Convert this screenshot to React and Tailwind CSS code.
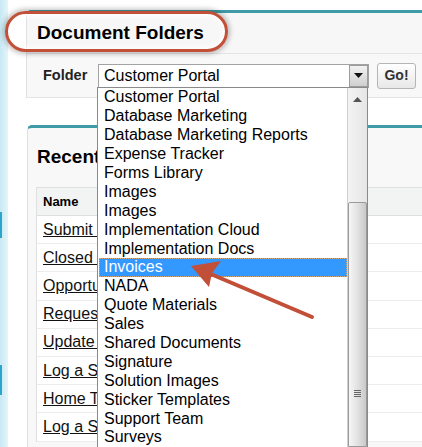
import React from "react";

const folders = [
  "Customer Portal",
  "Database Marketing",
  "Database Marketing Reports",
  "Expense Tracker",
  "Forms Library",
  "Images",
  "Images",
  "Implementation Cloud",
  "Implementation Docs",
  "Invoices",
  "NADA",
  "Quote Materials",
  "Sales",
  "Shared Documents",
  "Signature",
  "Solution Images",
  "Sticker Templates",
  "Support Team",
  "Surveys",
  "Training",
];

const recent = [
  "Submit feedback",
  "Closed cases",
  "Opportunity",
  "Request form",
  "Update Billing",
  "Log a SFDC case",
  "Home Tab",
  "Log a SFDC issue",
];

export default function App() {
  return (
    <div
      className="relative flex h-[447px] w-[422px] overflow-hidden bg-white text-[#222]"
      style={{ fontFamily: '"Liberation Sans", Arial, sans-serif' }}
    >
      {/* left page edge */}
      <div className="flex w-[8px] shrink-0 flex-col bg-gradient-to-r from-[#c6e9f4] to-[#e4f5fa]">
        <div className="h-[212px]" />
        <div className="h-[26px] w-[2px] bg-[#2aa6cc]" />
        <div className="h-[127px]" />
        <div className="h-[30px] w-[2px] bg-[#2aa6cc]" />
      </div>
      <div className="w-[18px] shrink-0" />

      <div className="flex min-w-0 flex-1 flex-col">
        {/* Document Folders panel */}
        <div className="mt-[10px] rounded-tl-[5px] border-l border-t-[3px] border-l-[#e0e0e0] border-t-[#3f9ba6] bg-[#f7f7f7]">
          <div className="flex h-[40px] items-center pl-[10px]">
            <h2 className="relative z-10 text-[19px] font-bold text-black">Document Folders</h2>
          </div>
          <div className="flex h-[45px] items-center border-y border-[#e4e4e4] bg-[#f8f8f8] pl-[16px]">
            <span className="w-[55px] text-[14.5px] font-bold text-[#222]">Folder</span>
            <div className="flex h-[24px] w-[271px] items-center justify-between border border-[#a3a3a3] bg-white pl-[5px]">
              <span className="text-[16px] text-black">Customer Portal</span>
              <span className="flex h-[22px] w-[19px] items-center justify-center border border-[#9c9c9c] bg-gradient-to-b from-[#f2f2f2] to-[#cfcfcf]">
                <svg width="9" height="5" viewBox="0 0 9 5">
                  <path d="M0 0h9L4.5 5z" fill="#111" />
                </svg>
              </span>
            </div>
            <button className="ml-[8px] h-[26px] w-[39px] rounded-[3px] border border-[#b5b5b5] bg-gradient-to-b from-white to-[#e8e8e8] text-[14px] font-bold text-[#333]">
              Go!
            </button>
          </div>
        </div>

        {/* Recent panel */}
        <div className="mt-[27px] ml-[1px] flex-1 rounded-tl-[5px] border-l border-t-[3px] border-l-[#e0e0e0] border-t-[#3f9ba6] bg-[#f8f8f8] pl-[8px]">
          <h2 className="flex h-[59px] w-[62px] items-center overflow-hidden whitespace-nowrap pl-[1px] text-[19px] font-bold text-black">
            Recent Documents
          </h2>
          <div className="border-l border-t border-[#e0e0e0] bg-white">
            <div className="flex h-[28px] items-center border-b border-[#dedede] bg-[#f2f3f3] pl-[6px] text-[13px] font-bold text-black">
              Name
            </div>
            {recent.map((r, i) => (
              <div key={i} className="flex h-[28.2px] items-center border-b border-[#ececec] pl-[6px]">
                <span className="w-[55px] overflow-hidden whitespace-nowrap text-[16px] text-[#111] underline">{r}</span>
              </div>
            ))}
          </div>
        </div>
      </div>

      {/* annotation ellipse */}
      <div className="pointer-events-none absolute left-[5px] top-[11px] h-[41px] w-[223px] rounded-full border-[3px] border-[#c24f37] shadow-[0_0_5px_2px_rgba(0,0,0,0.25),inset_0_0_5px_2px_rgba(255,255,255,0.9)]" />

      {/* open dropdown list */}
      <div className="absolute left-[97px] top-[87px] flex h-[360px] w-[271px] overflow-hidden border-x border-t border-[#8a8a8a] bg-white">
        <ul className="flex-1 pl-[1px]">
          {folders.map((f, i) =>
            i === 9 ? (
              <li
                key={i}
                className="flex h-[18.9px] items-center border border-dotted border-[#d3a77c] bg-[#3399ff] pl-[4px] text-[16px] text-white"
              >
                {f}
              </li>
            ) : (
              <li key={i} className="flex h-[18.9px] items-center whitespace-nowrap pl-[5px] text-[16px] text-black">
                {f}
              </li>
            )
          )}
        </ul>
        <div className="flex w-[20px] flex-col border-l border-[#d0d0d0] bg-gradient-to-r from-[#f3f3f3] to-[#e6e6e6]">
          <div className="flex h-[22px] items-center justify-center">
            <svg width="9" height="5" viewBox="0 0 9 5">
              <path d="M0 5h9L4.5 0z" fill="#555" />
            </svg>
          </div>
          <div className="h-[92px]" />
          <div className="flex flex-1 flex-col items-center rounded-t-[2px] border border-[#9a9a9a] bg-gradient-to-r from-[#f6f6f6] via-[#e2e2e2] to-[#c9c9c9]">
            <div className="h-[187px]" />
            <div className="flex flex-col gap-[1px]">
              <div className="h-[1px] w-[7px] bg-[#666]" />
              <div className="h-[1px] w-[7px] bg-[#666]" />
              <div className="h-[1px] w-[7px] bg-[#666]" />
              <div className="h-[1px] w-[7px] bg-[#666]" />
            </div>
          </div>
        </div>
      </div>

      {/* annotation arrow */}
      <svg className="pointer-events-none absolute left-0 top-0" width="422" height="447" viewBox="0 0 422 447">
        <line x1="312" y1="317" x2="206" y2="272" stroke="#c24f37" strokeWidth="4" strokeLinecap="round" />
        <polygon points="191,266 221,261 212,273 209,287" fill="#c24f37" />
      </svg>
    </div>
  );
}
